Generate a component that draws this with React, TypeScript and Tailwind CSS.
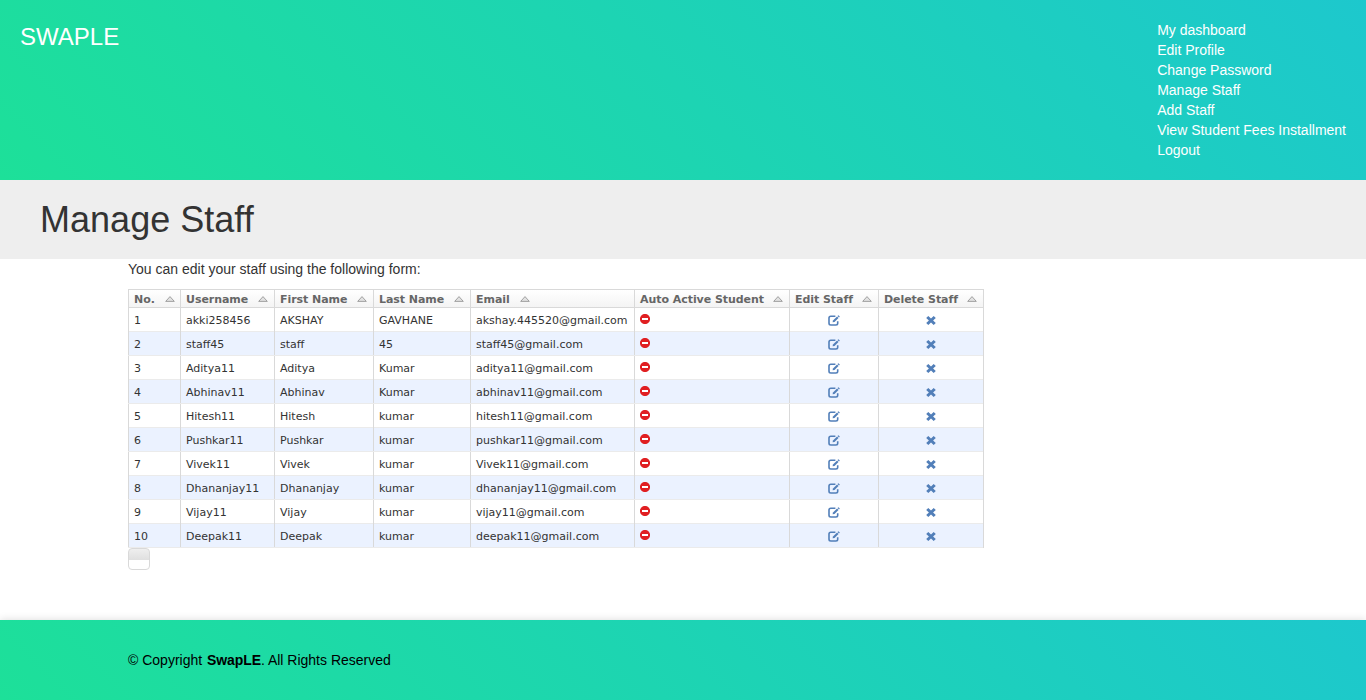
const navLinks = [
  'My dashboard',
  'Edit Profile',
  'Change Password',
  'Manage Staff',
  'Add Staff',
  'View Student Fees Installment',
  'Logout',
];

const columns = [
  'No.',
  'Username',
  'First Name',
  'Last Name',
  'Email',
  'Auto Active Student',
  'Edit Staff',
  'Delete Staff',
];

const staff = [
  ['akki258456', 'AKSHAY', 'GAVHANE', 'akshay.445520@gmail.com'],
  ['staff45', 'staff', '45', 'staff45@gmail.com'],
  ['Aditya11', 'Aditya', 'Kumar', 'aditya11@gmail.com'],
  ['Abhinav11', 'Abhinav', 'Kumar', 'abhinav11@gmail.com'],
  ['Hitesh11', 'Hitesh', 'kumar', 'hitesh11@gmail.com'],
  ['Pushkar11', 'Pushkar', 'kumar', 'pushkar11@gmail.com'],
  ['Vivek11', 'Vivek', 'kumar', 'Vivek11@gmail.com'],
  ['Dhananjay11', 'Dhananjay', 'kumar', 'dhananjay11@gmail.com'],
  ['Vijay11', 'Vijay', 'kumar', 'vijay11@gmail.com'],
  ['Deepak11', 'Deepak', 'kumar', 'deepak11@gmail.com'],
];

const gridCols = 'grid grid-cols-[52px_94px_99px_97px_164px_155px_89px_105px]';
const cell = 'border-l border-[#d9d9d9] pl-[5px] whitespace-nowrap';

function SortIcon() {
  return (
    <svg width="10" height="6" viewBox="0 0 10 6" className="mt-[6px] shrink-0">
      <path d="M5 .6 9.3 5.4H.7Z" fill="#e2e2e2" stroke="#999" strokeWidth=".9" strokeLinejoin="round" />
    </svg>
  );
}

function MinusIcon() {
  return (
    <svg width="10" height="10" viewBox="0 0 10 10">
      <circle cx="5" cy="5" r="5.1" fill="#e01f22" />
      <rect x="2" y="4" width="6" height="2" fill="#fff" />
    </svg>
  );
}

function EditIcon() {
  return (
    <svg width="12" height="11" viewBox="0 0 12 11" fill="none" stroke="#527fb9">
      <path d="M7.4 1.3H2.8Q1 1.3 1 3V8.3Q1 10 2.8 10H7.9Q9.7 10 9.7 8.3V6.2" strokeWidth="1.6" />
      <path d="M4.6 7.3 5 5.5 9.1 1.5 10.5 2.9 6.5 6.9Z" fill="#527fb9" stroke="none" />
      <path d="M9.6 1 10.4.2 11.8 1.6 11 2.4Z" fill="#527fb9" stroke="none" />
    </svg>
  );
}

function RemoveIcon() {
  return (
    <svg width="10" height="9" viewBox="0 0 10 9">
      <path d="M2.3 0 5 2.6 7.7 0 9.8 2 7.1 4.5 9.8 7 7.7 9 5 6.4 2.3 9 .2 7 2.9 4.5.2 2Z" fill="#527fb9" />
    </svg>
  );
}

export default function App() {
  return (
    <div className="flex h-[700px] flex-col overflow-hidden bg-white font-['Liberation_Sans',Arial,sans-serif] text-sm leading-5 text-[#333]">
      <header className="flex h-[180px] shrink-0 justify-between bg-[linear-gradient(45deg,#1de099,#1dc8cd)] p-5 text-white">
        <a className="mt-px h-8 text-2xl leading-8">SWAPLE</a>
        <nav>
          <ul>
            {navLinks.map((link) => (
              <li key={link}>{link}</li>
            ))}
          </ul>
        </nav>
      </header>
      <div className="flex h-[79px] shrink-0 items-center bg-[#eee] px-10">
        <h1 className="text-4xl leading-10 tracking-[0.02px]">Manage Staff</h1>
      </div>
      <main className="flex-1 px-32">
        <p>You can edit your staff using the following form:</p>
        <div className="mt-[10px] w-[856px] border-r border-[#d9d9d9] font-['DejaVu_Sans',Verdana,sans-serif] text-[11px]">
          <div className={`${gridCols} h-[19px] border-y border-[#d9d9d9] bg-linear-to-b from-white to-[#f4f4f4] font-bold text-[#666]`}>
            {columns.map((name) => (
              <div
                key={name}
                className={`${cell} flex h-[17px] items-start ${name === 'No.' ? 'pr-[5px]' : 'pr-[6px]'} ${name === 'Email' ? 'gap-[10px]' : 'justify-between'}`}
              >
                <span className="leading-[19px] tracking-[-0.05px]">{name}</span>
                <SortIcon />
              </div>
            ))}
          </div>
          {staff.map((row, i) => (
            <div key={row[0]} className={`${gridCols} overflow-hidden leading-[26px] ${i % 2 ? '-mt-px h-[25px] border-y border-[#ebebeb] bg-[#ebf2ff]' : 'h-6 bg-white'}`}>
              <div className={cell}>{i + 1}</div>
              {row.map((value, j) => (
                <div key={j} className={cell}>{value}</div>
              ))}
              <div className={`${cell} pt-[6px]`}><MinusIcon /></div>
              <div className="flex justify-center border-l border-[#d9d9d9] pt-[7px]"><EditIcon /></div>
              <div className="flex justify-center border-l border-[#d9d9d9] pt-[8px]"><RemoveIcon /></div>
            </div>
          ))}
        </div>
        <div className="h-[22px] w-[22px] rounded-[4px] border border-[#d9d9d9] bg-[linear-gradient(#efefef,#dfdfdf_11px,#fff_11px)]" />
      </main>
      <footer className="h-20 shrink-0 bg-[linear-gradient(45deg,#1de099,#1dc8cd)] px-32 pt-[30px] text-black shadow-[0_0_8px_rgba(0,0,0,0.15)]">
        © Copyright <strong className="ml-px tracking-[-0.1px]">SwapLE</strong>. All Rights Reserved
      </footer>
    </div>
  );
}
